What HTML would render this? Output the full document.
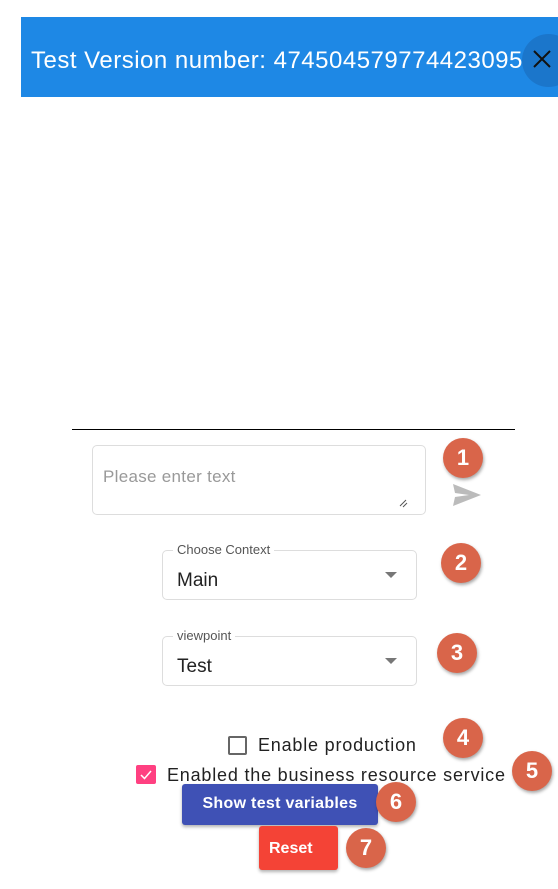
<!DOCTYPE html>
<html><head><style>
body{margin:0;width:558px;height:889px;position:relative;background:#fff;font-family:"Liberation Sans",sans-serif;overflow:hidden}
.a{position:absolute}
.b{position:absolute;width:40px;height:40px;border-radius:50%;background:#D9654A;color:#fff;font-weight:bold;font-size:22px;text-align:center;line-height:40px;box-shadow:1px 2px 3px rgba(0,0,0,.35)}
.sel{position:absolute;border:1px solid #ddd;border-radius:5px;width:253px;height:48px}
.lbl{position:absolute;top:-9px;left:10px;background:#fff;padding:0 4px;font-size:13px;color:#555}
.val{position:absolute;left:14px;top:19px;font-size:19px;color:#222}
.arr{position:absolute;left:222px;top:21px;width:0;height:0;border-left:6px solid transparent;border-right:6px solid transparent;border-top:6px solid #777}
</style></head><body>
<div class="a" style="left:21px;top:17px;width:537px;height:80px;background:#1E88E5"></div>
<div class="a" style="left:31px;top:47px;font-size:24px;color:#fff;white-space:nowrap;letter-spacing:0.5px">Test Version number: 474504579774423095</div>
<div class="a" style="left:522px;top:34px;width:53px;height:53px;border-radius:50%;background:#1B76CB"></div>
<svg class="a" style="left:533px;top:50px" width="18" height="18" viewBox="0 0 18 18"><path d="M1 1L17 17M17 1L1 17" stroke="#111" stroke-width="2"/></svg>
<div class="a" style="left:72px;top:429px;width:443px;height:1px;background:#000"></div>
<div class="a" style="left:92px;top:445px;width:332px;height:68px;border:1px solid #ddd;border-radius:5px"></div>
<div class="a" style="left:103px;top:467px;font-size:17px;color:#999;letter-spacing:0.3px">Please enter text</div>
<svg class="a" style="left:398px;top:498px" width="10" height="10"><path d="M2 8L8 2M5 9L9 5" stroke="#555" stroke-width="1"/></svg>
<svg class="a" style="left:453px;top:484px" width="28" height="22"><path d="M0 0L28 11L0 22L2 13L16 11L2 9Z" fill="#bbb"/></svg>
<div class="b" style="left:443px;top:438px">1</div>
<div class="sel" style="left:162px;top:550px"><span class="lbl">Choose Context</span><span class="val">Main</span><span class="arr"></span></div>
<div class="b" style="left:441px;top:543px">2</div>
<div class="sel" style="left:162px;top:636px"><span class="lbl">viewpoint</span><span class="val">Test</span><span class="arr"></span></div>
<div class="b" style="left:437px;top:633px">3</div>
<div class="a" style="left:228px;top:736px;width:15px;height:15px;border:2px solid #666;border-radius:2px"></div>
<div class="a" style="left:258px;top:735px;font-size:18px;color:#222;letter-spacing:0.8px">Enable production</div>
<div class="b" style="left:443px;top:718px">4</div>
<div class="a" style="left:136px;top:765px;width:20px;height:19px;background:#FF4081;border-radius:2px"></div>
<svg class="a" style="left:139px;top:768px" width="14" height="13"><path d="M2 7L5.5 10.5L12 3" stroke="#fff" stroke-width="1.5" fill="none"/></svg>
<div class="a" style="left:167px;top:765px;font-size:18px;color:#222;white-space:nowrap;letter-spacing:0.8px">Enabled the business resource service</div>
<div class="b" style="left:512px;top:751px">5</div>
<div class="a" style="left:182px;top:784px;width:196px;height:41px;background:#3F51B5;border-radius:3px;box-shadow:0 2px 3px rgba(0,0,0,.3);color:#fff;font-size:16px;font-weight:bold;text-align:center;line-height:40px;letter-spacing:0.3px">Show test variables</div>
<div class="b" style="left:376px;top:782px">6</div>
<div class="a" style="left:259px;top:826px;width:79px;height:44px;background:#F44336;border-radius:3px;box-shadow:0 2px 3px rgba(0,0,0,.3);color:#fff;font-size:16px;font-weight:bold;line-height:46px;padding-left:10px;box-sizing:border-box">Reset</div>
<div class="b" style="left:346px;top:828px">7</div>
</body></html>
